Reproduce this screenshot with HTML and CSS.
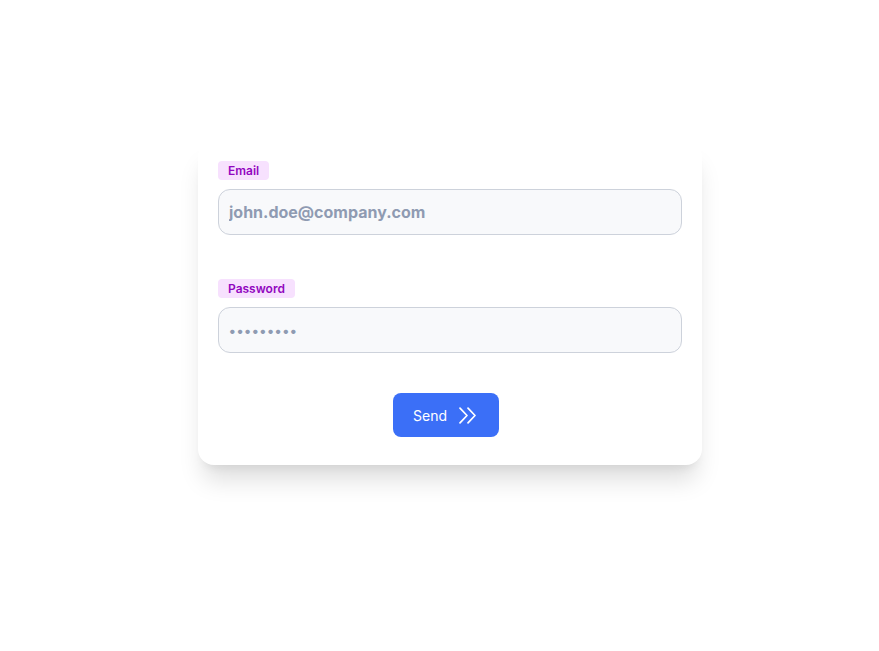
FILE: index.html
```html
<!DOCTYPE html>
<html lang="en">
<head>
    <meta charset="UTF-8">
    <meta name="viewport" content="width=device-width, initial-scale=1.0">
    <title>Sign in</title>
    <link rel="stylesheet" href="styles.css">
</head>
<body>
    <div class="page">
        <form class="card">
            <div class="field">
                <label for="email" class="tag">Email</label>
                <input id="email" type="text" class="text-input" placeholder="john.doe@company.com">
            </div>
            <div class="field">
                <label for="password" class="tag">Password</label>
                <input id="password" type="text" class="text-input dots" placeholder="•••••••••">
            </div>
            <div class="actions">
                <button class="send-button" type="submit">
                    Send
                    <svg width="20" height="17" viewBox="0 0 20 17" fill="none" stroke="currentColor" stroke-width="1.7" stroke-linecap="round" stroke-linejoin="round">
                        <path d="M2 1.2l7 7.3-7 7.3"/>
                        <path d="M10 1.2l7 7.3-7 7.3"/>
                    </svg>
                </button>
            </div>
        </form>
    </div>
</body>
</html>
```

FILE: styles.css
```css
body {
    margin: 0;
    background: #ffffff;
    font-family: Inter, "Noto Sans", sans-serif;
}

.page {
    min-height: 100vh;
    box-sizing: border-box;
    padding: 141px 0 0 198px;
}

/* the white card with the soft shadow below */
.card {
    width: 504px;
    box-sizing: border-box;
    padding: 20px 20px 28px;
    background: #ffffff;
    border-radius: 16px;
    box-shadow: 0 20px 25px -5px rgba(0, 0, 0, 0.13), 0 8px 10px -6px rgba(0, 0, 0, 0.08);
}

.field {
    display: flex;
    flex-direction: column;
    align-items: flex-start;
    gap: 9px;
    margin-bottom: 44px;
}

.field + .field {
    margin-bottom: 40px;
}

.tag {
    display: inline-block;
    padding: 0 10px;
    height: 19px;
    line-height: 19px;
    font-size: 12px;
    font-weight: 600;
    color: #9207bf;
    background: #f7e1fe;
    border-radius: 4px;
}

.text-input {
    width: 100%;
    height: 46px;
    box-sizing: border-box;
    padding: 0 10px;
    font-family: Inter, "Noto Sans", sans-serif;
    font-size: 16px;
    font-weight: 700;
    color: #334155;
    background: #f8f9fb;
    border: 1px solid #cdd2db;
    border-radius: 12px;
    outline: none;
}

.text-input::placeholder {
    color: #8f9bb2;
}

.dots {
    font-size: 14px;
    letter-spacing: 1px;
}

.actions {
    display: flex;
    justify-content: center;
}

.send-button {
    display: flex;
    align-items: center;
    gap: 11px;
    height: 44px;
    margin-right: 8px;
    padding: 0 21px 0 20px;
    font-family: Inter, "Noto Sans", sans-serif;
    font-size: 14px;
    color: #ffffff;
    background: #3b6ff7;
    border: none;
    border-radius: 8px;
    cursor: pointer;
}
```
